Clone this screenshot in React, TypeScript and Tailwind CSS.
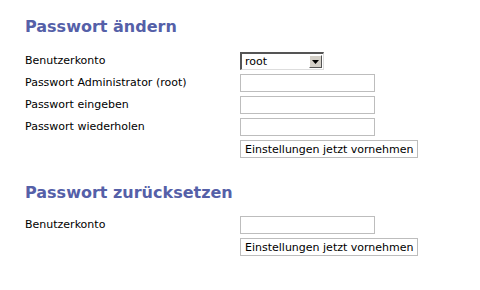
const font = { fontFamily: '"DejaVu Sans", Verdana, sans-serif' };

function Input() {
  return (
    <input
      type="text"
      className="h-[18px] w-[135px] border border-[#bdbdbd] bg-white px-1 text-[11px] outline-none"
    />
  );
}

function SubmitButton() {
  return (
    <button
      type="button"
      className="h-[18px] w-[178px] border border-[#bdbdbd] bg-white pt-px text-left pl-1 text-[11px] leading-none text-black"
    >
      Einstellungen jetzt vornehmen
    </button>
  );
}

function UserSelect() {
  return (
    <div className="flex h-[18px] w-[84px] items-center border-t-2 border-l-2 border-t-[#555] border-l-[#555] border-b border-r border-b-[#ddd] border-r-[#ddd] bg-white">
      <span className="flex-1 pl-[3px] text-[11px] leading-none">root</span>
      <span className="mr-px flex h-[13px] w-[13px] items-center justify-center border border-t-white border-l-white border-b-[#555] border-r-[#555] bg-[#d4d0c8]">
        <svg width="7" height="4" viewBox="0 0 7 4">
          <path d="M0 0h7L3.5 4z" fill="#000" />
        </svg>
      </span>
    </div>
  );
}

function Row({ label, children }: { label: string; children: React.ReactNode }) {
  return (
    <div className="flex h-[22px] items-center">
      <span className="w-[215px] text-[11px] text-black">{label}</span>
      {children}
    </div>
  );
}

export default function App() {
  return (
    <div className="h-[290px] w-[480px] bg-white px-[25px] pt-[15px]" style={font}>
      <h2 className="text-[16px] font-bold text-[#5560a8]">Passwort ändern</h2>
      <div className="mt-[11px]">
        <Row label="Benutzerkonto">
          <UserSelect />
        </Row>
        <Row label="Passwort Administrator (root)">
          <Input />
        </Row>
        <Row label="Passwort eingeben">
          <Input />
        </Row>
        <Row label="Passwort wiederholen">
          <Input />
        </Row>
        <div className="flex h-[22px] items-center pl-[215px]">
          <SubmitButton />
        </div>
      </div>

      <h2 className="mt-[21px] text-[16px] font-bold text-[#5560a8]">Passwort zurücksetzen</h2>
      <div className="mt-[9px]">
        <Row label="Benutzerkonto">
          <Input />
        </Row>
        <div className="flex h-[22px] items-center pl-[215px]">
          <SubmitButton />
        </div>
      </div>
    </div>
  );
}
